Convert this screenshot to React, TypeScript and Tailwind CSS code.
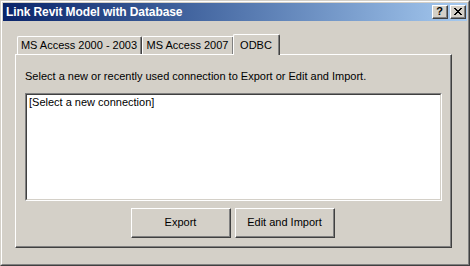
import React from 'react';

const font = { fontFamily: '"Liberation Sans", Arial, sans-serif' };

const closePixels = [
  'XX....XX',
  '.XX..XX.',
  '..XXXX..',
  '...XX...',
  '..XXXX..',
  '.XX..XX.',
  'XX....XX',
];

function CloseGlyph() {
  return (
    <svg width="8" height="7" viewBox="0 0 8 7" shapeRendering="crispEdges">
      {closePixels.map((row, y) =>
        row.split('').map((c, x) =>
          c === 'X' ? <rect key={`${x}-${y}`} x={x} y={y} width="1" height="1" fill="#000" /> : null
        )
      )}
    </svg>
  );
}

// classic raised bevel: white / #404040 outer, #808080 inner shadow
function Raised({ className, children }: { className?: string; children?: React.ReactNode }) {
  return (
    <div className={`border border-t-white border-l-white border-r-[#404040] border-b-[#404040] bg-[#d4d0c8] ${className ?? ''}`}>
      <div className="w-full h-full border-r border-b border-r-[#808080] border-b-[#808080] flex items-center justify-center">
        {children}
      </div>
    </div>
  );
}

function Tab({ label, width }: { label: string; width: string }) {
  return (
    <div className={`${width} h-[18px] rounded-tl-[2px] rounded-tr-[2px] border-t border-l border-r border-t-white border-l-white border-r-[#404040] bg-[#d4d0c8]`}>
      <div className="h-full border-r border-r-[#808080] flex justify-center pt-[2px] text-[11px] leading-[13px] text-black">
        {label}
      </div>
    </div>
  );
}

export default function App() {
  return (
    <div className="w-[470px] h-[266px] bg-[#d4d0c8] border border-t-[#d4d0c8] border-l-[#d4d0c8] border-r-[#404040] border-b-[#404040]" style={font}>
      <div className="w-full h-full border border-t-white border-l-white border-r-[#808080] border-b-[#808080] p-[1px] flex flex-col">
        {/* Title bar */}
        <div className="h-[18px] shrink-0 flex items-center pl-[3px] pr-[1px] bg-gradient-to-r from-[#0a246a] to-[#a6caf0]">
          <span className="text-[12px] font-bold text-white leading-[14px] tracking-[-0.1px]">Link Revit Model with Database</span>
          <div className="ml-auto flex gap-[2px]">
            <Raised className="w-[16px] h-[14px]">
              <span className="text-[11px] font-bold leading-[11px] text-black">?</span>
            </Raised>
            <Raised className="w-[16px] h-[14px]">
              <CloseGlyph />
            </Raised>
          </div>
        </div>

        {/* Tabs */}
        <div className="pl-[12px] pt-[12px] flex flex-col">
          <div className="h-[21px] flex items-end pl-[2px] relative z-10">
            <Tab label="MS Access 2000 - 2003" width="w-[125px]" />
            <Tab label="MS Access 2007" width="w-[92px]" />
            <div className="w-[47px] h-[21px] -ml-[1px] -mb-[1px] rounded-tl-[2px] rounded-tr-[2px] border-t border-l border-r border-t-white border-l-white border-r-[#404040] bg-[#d4d0c8]">
              <div className="h-[20px] border-r border-r-[#808080] flex justify-center pt-[4px] text-[11px] leading-[13px] text-black">
                ODBC
              </div>
            </div>
          </div>

          {/* Tab panel */}
          <div className="w-[437px] h-[194px] border border-t-white border-l-white border-r-[#404040] border-b-[#404040]">
            <div className="w-full h-full border-r border-b border-r-[#808080] border-b-[#808080] flex flex-col pt-[15px]">
              <p className="ml-[9px] text-[11px] leading-[13px] text-black">
                Select a new or recently used connection to Export or Edit and Import.
              </p>
              <div className="ml-[9px] mt-[10px] w-[417px] h-[108px] border border-t-[#808080] border-l-[#808080] border-r-white border-b-white">
                <div className="w-full h-full border border-t-[#404040] border-l-[#404040] border-r-[#d4d0c8] border-b-[#d4d0c8] bg-white pl-[2px] pt-[1px] text-[11px] leading-[13px] text-black">
                  [Select a new connection]
                </div>
              </div>
              <div className="mt-[7px] flex justify-center gap-[4px]">
                <Raised className="w-[100px] h-[30px]">
                  <span className="text-[11px] leading-[13px] text-black">Export</span>
                </Raised>
                <Raised className="w-[100px] h-[30px]">
                  <span className="text-[11px] leading-[13px] text-black">Edit and Import</span>
                </Raised>
              </div>
            </div>
          </div>
        </div>
      </div>
    </div>
  );
}
